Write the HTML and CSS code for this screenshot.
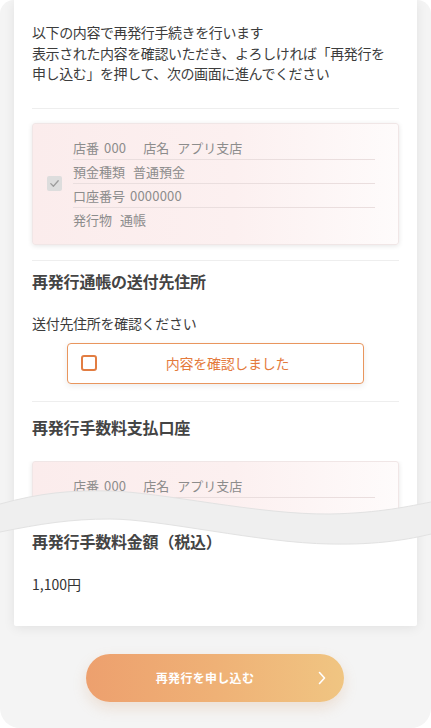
FILE: index.html
```html
<!DOCTYPE html>
<html lang="ja">
<head>
<meta charset="utf-8">
<title>再発行の確認</title>
<link rel="stylesheet" href="styles.css">
</head>
<body>
<div class="frame">
  <div class="card">
    <p class="intro">以下の内容で再発行手続きを行います<br>表示された内容を確認いただき、よろしければ「再発行を<br>申し込む」を押して、次の画面に進んでください</p>
    <hr class="divider d1">
    <div class="acct">
      <span class="chk"><svg width="15" height="15" viewBox="0 0 15 15"><polyline points="3.8,7.6 6.4,10.2 11.2,4.8" fill="none" stroke="#9c9c9c" stroke-width="1.3" stroke-linecap="round" stroke-linejoin="round"/></svg></span>
      <ul class="rows">
        <li><span>店番</span><span class="v num">000</span><span class="v2">店名</span><span class="v">アプリ支店</span></li>
        <li><span>預金種類</span><span class="v">普通預金</span></li>
        <li><span>口座番号</span><span class="v num">0000000</span></li>
        <li><span>発行物</span><span class="v">通帳</span></li>
      </ul>
    </div>
    <hr class="divider d2">
    <h2 class="heading hd1">再発行通帳の送付先住所</h2>
    <p class="sub">送付先住所を確認ください</p>
    <label class="confirm"><span class="box"></span><span class="ctext">内容を確認しました</span></label>
    <hr class="divider d3">
    <h2 class="heading hd2">再発行手数料支払口座</h2>
    <div class="clip">
      <div class="acct partial">
        <span class="chk blank"></span>
        <ul class="rows">
          <li class="lined"><span>店番</span><span class="v num">000</span><span class="v2">店名</span><span class="v">アプリ支店</span></li>
        </ul>
      </div>
    </div>
    <h2 class="heading hd3">再発行手数料金額（税込）</h2>
    <p class="amount">1,100円</p>
  </div>
  <svg class="wave" width="431" height="75" viewBox="0 0 431 75">
    <path d="M0,25 C40,14 70,11 110,12 C160,13 260,36 330,35 C380,34 410,27 431,23 L431,55 C410,60 380,66 330,65 C260,64 160,40 110,40 C70,40 40,45 0,53 Z" fill="#efefef"/>
    <path d="M0,25 C40,14 70,11 110,12 C160,13 260,36 330,35 C380,34 410,27 431,23" fill="none" stroke="#e2e2e2" stroke-width="1"/>
    <path d="M0,53 C40,45 70,40 110,40 C160,40 260,64 330,65 C380,66 410,60 431,55" fill="none" stroke="#e2e2e2" stroke-width="1"/>
  </svg>
  <div class="actions">
    <button class="submit" type="button"><span class="stext">再発行を申し込む</span><svg class="chev" width="8" height="14" viewBox="0 0 8 14"><polyline points="1.5,1.5 6.5,7 1.5,12.5" fill="none" stroke="#ffffff" stroke-width="1.6" stroke-linecap="round" stroke-linejoin="round"/></svg></button>
  </div>
</div>
</body>
</html>
```

FILE: styles.css
```css
* { box-sizing: border-box; }
html, body {
  margin: 0;
  padding: 0;
  background: #ffffff;
}
body {
  font-family: "Noto Sans CJK JP", "Noto Sans", sans-serif;
  color: #3c3c3c;
}
.frame {
  position: relative;
  width: 431px;
  height: 728px;
  background: #f4f4f4;
  border-radius: 14px 14px 20px 20px;
}
.card {
  margin: 0 14px;
  padding: 22px 18px 32px;
  background: #ffffff;
  border-radius: 0 0 2px 2px;
  box-shadow: 0 2px 12px rgba(0, 0, 0, 0.08);
}
.intro {
  margin: 0;
  font-size: 14px;
  line-height: 20.5px;
  letter-spacing: -0.4px;
  color: #3c3c3c;
}
.divider {
  border: 0;
  height: 1px;
  background: #eeeeee;
  margin: 0;
}
.d1 { margin-top: 24px; }
.d2 { margin-top: 15px; }
.d3 { margin-top: 17px; }
.acct {
  display: flex;
  align-items: center;
  margin-top: 14px;
  height: 122px;
  padding: 12px 23px 12px 14px;
  border: 1px solid #f0e6e6;
  border-radius: 3px;
  background: linear-gradient(90deg, #fbecec 0%, #fcf0f0 55%, #fefbfb 100%);
  box-shadow: 0 1px 5px rgba(0, 0, 0, 0.10);
}
.chk {
  flex: none;
  width: 15px;
  height: 15px;
  border-radius: 2px;
  background: #dddddd;
  display: flex;
}
.chk.blank { background: transparent; }
.rows {
  list-style: none;
  margin: 0 0 0 11px;
  padding: 0;
  flex: 1;
}
.rows li {
  height: 24px;
  line-height: 23px;
  font-size: 13px;
  color: #8c8c8c;
  border-bottom: 1px solid #eadede;
  display: flex;
}
.rows li:last-child { border-bottom: 0; }
.rows li.lined { border-bottom: 1px solid #eadede; }
.v { margin-left: 8px; }
.v.num { margin-left: 5px; letter-spacing: 0.2px; }
.v2 { margin-left: 17px; }
.heading {
  margin: 0;
  font-size: 16px;
  line-height: 24px;
  font-weight: 700;
  color: #444444;
  letter-spacing: -0.2px;
}
.hd1 { margin-top: 8px; }
.hd2 { margin-top: 13px; }
.hd3 { margin-top: 13px; }
.sub {
  margin: 20px 0 0;
  font-size: 14px;
  line-height: 20px;
  letter-spacing: -0.3px;
  color: #3c3c3c;
}
.confirm {
  display: flex;
  align-items: center;
  width: 297px;
  height: 41px;
  margin: 10px auto 0;
  padding: 0 5px 0 13px;
  border: 1px solid #e9965e;
  border-radius: 4px;
  background: #ffffff;
  box-shadow: 0 2px 6px rgba(0, 0, 0, 0.08);
}
.box {
  flex: none;
  width: 16px;
  height: 16px;
  border: 2px solid #e27d42;
  border-radius: 3px;
}
.ctext {
  flex: 1;
  text-align: center;
  font-size: 14px;
  color: #e47a3c;
  letter-spacing: -0.3px;
}
.clip {
  height: 55px;
  margin: 22px -4px 0;
  padding: 0 4px;
  overflow: hidden;
}
.acct.partial {
  margin-top: 0;
  align-items: flex-start;
}
.amount {
  margin: 21px 0 0;
  font-size: 14px;
  line-height: 20px;
  color: #333333;
}
.wave {
  position: absolute;
  left: 0;
  top: 479px;
  display: block;
}
.actions {
  display: flex;
  justify-content: center;
  margin-top: 28px;
}
.submit {
  position: relative;
  width: 258px;
  height: 48px;
  border: 0;
  border-radius: 24px;
  background: linear-gradient(90deg, #eda06e 0%, #efb176 50%, #f0c582 100%);
  box-shadow: 0 6px 14px rgba(210, 150, 100, 0.22);
  font-family: "Noto Sans CJK JP", "Noto Sans", sans-serif;
  font-size: 12px;
  font-weight: 700;
  color: #ffffff;
  letter-spacing: 0.3px;
  display: flex;
  align-items: center;
  justify-content: center;
  padding: 0 20px 0 0;
  margin-left: -1px;
}
.stext { display: block; }
.chev {
  position: absolute;
  right: 18px;
  top: 17px;
}
```
